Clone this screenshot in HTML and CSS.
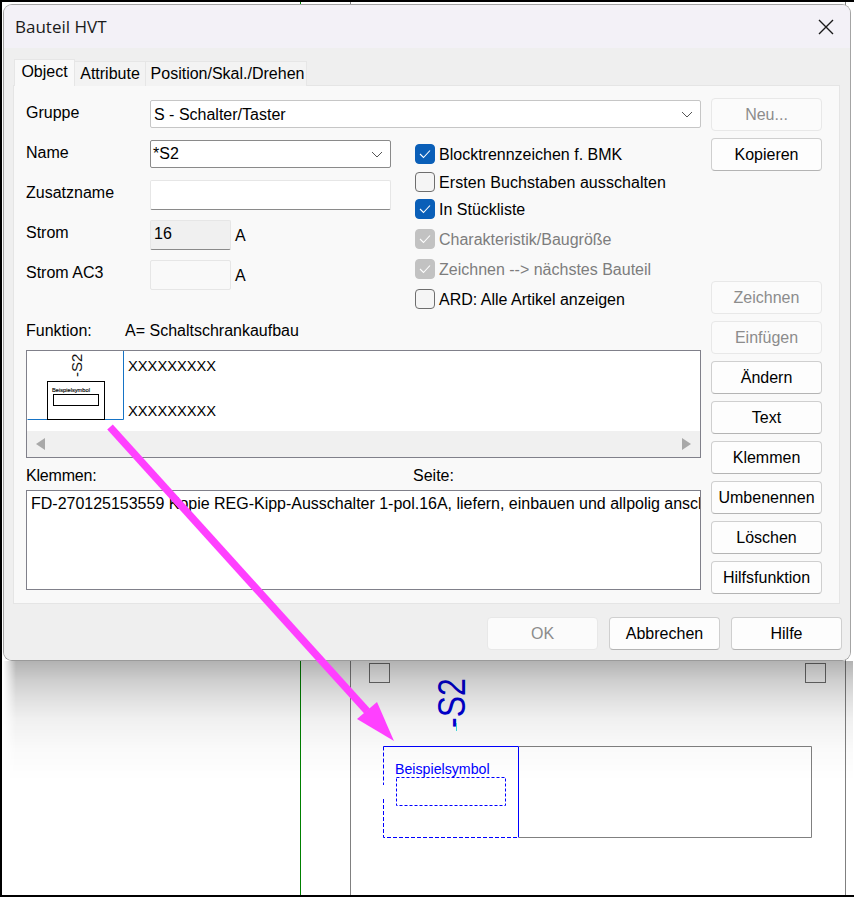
FILE: index.html
```html
<!DOCTYPE html>
<html lang="de">
<head>
<meta charset="utf-8">
<title>Bauteil HVT</title>
<link rel="stylesheet" href="styles.css">
</head>
<body>
<div class="desk">
  <svg class="canvas" width="854" height="897" viewBox="0 0 854 897">
    <line x1="300.5" y1="0" x2="300.5" y2="897" stroke="#008000"/>
    <line x1="350.5" y1="0" x2="350.5" y2="897" stroke="#808080"/>
    <line x1="845.5" y1="0" x2="845.5" y2="897" stroke="#808080"/>
    <rect x="369.5" y="663.5" width="20" height="19" fill="none" stroke="#707070"/>
    <rect x="805.5" y="663.5" width="20" height="19" fill="none" stroke="#707070"/>
    <path d="M519 746.5H811.5V837.5H519" fill="none" stroke="#808080"/>
    <path d="M383.5 746.5H518.5V837.5" fill="none" stroke="#0000ff"/>
    <path d="M383.5 746.5V785M383.5 799V837.5H518" fill="none" stroke="#0000ff" stroke-dasharray="4 2"/>
    <rect x="396.5" y="777.5" width="109" height="28" fill="none" stroke="#0000ff" stroke-dasharray="3 2"/>
    <text class="cad-label" x="395" y="774">Beispielsymbol</text>
    <text class="cad-tag" transform="translate(465 728) rotate(-90) scale(1 1.2)">-S2</text>
    <line x1="456.5" y1="723" x2="456.5" y2="731" stroke="#40e0e0"/>
  </svg>

  <section class="dialog">
    <header class="titlebar">
      <span class="title">Bauteil HVT</span>
      <svg class="close" width="16" height="16" viewBox="0 0 16 16"><path d="M1 1L15 15M15 1L1 15" stroke="#1a1a1a" stroke-width="1.4" fill="none"/></svg>
    </header>
    <div class="dialog-body">
      <nav class="tabs">
        <span class="tab tab-active">Object</span>
        <span class="tab tab-attr">Attribute</span>
        <span class="tab tab-pos">Position/Skal./Drehen</span>
      </nav>
      <div class="panel">
        <div class="main">
          <div class="combo combo-wide"><span>S - Schalter/Taster</span>
            <svg class="chev" width="12" height="7" viewBox="0 0 12 7"><path d="M1 1L6 6L11 1" fill="none" stroke="#555" stroke-width="1"/></svg>
          </div>
          <div class="label-gruppe">Gruppe</div>
          <div class="form">
            <div class="fields">
              <div class="field field-name"><label>Name</label>
                <div class="combo combo-name"><span>*S2</span>
                  <svg class="chev" width="12" height="7" viewBox="0 0 12 7"><path d="M1 1L6 6L11 1" fill="none" stroke="#555" stroke-width="1"/></svg>
                </div>
              </div>
              <div class="field"><label>Zusatzname</label><div class="input input-full"></div></div>
              <div class="field"><label>Strom</label><div class="input input-ro">16</div><span class="unit">A</span></div>
              <div class="field"><label>Strom AC3</label><div class="input input-off"></div><span class="unit">A</span></div>
            </div>
            <div class="checks">
              <div class="check"><span class="box box-on"><svg width="12" height="10" viewBox="0 0 12 10"><path d="M1 5L4.500 8.500L11 1.500" fill="none" stroke="#fff" stroke-width="1.100"/></svg></span>Blocktrennzeichen f. BMK</div>
              <div class="check check-long"><span class="box"></span>Ersten Buchstaben ausschalten</div>
              <div class="check check-tight"><span class="box box-on"><svg width="12" height="10" viewBox="0 0 12 10"><path d="M1 5L4.500 8.500L11 1.500" fill="none" stroke="#fff" stroke-width="1.100"/></svg></span>In Stückliste</div>
              <div class="check check-wide check-off"><span class="box box-dim"><svg width="12" height="10" viewBox="0 0 12 10"><path d="M1 5L4.500 8.500L11 1.500" fill="none" stroke="#fff" stroke-width="1.100"/></svg></span>Charakteristik/Baugröße</div>
              <div class="check check-wide check-off"><span class="box box-dim"><svg width="12" height="10" viewBox="0 0 12 10"><path d="M1 5L4.500 8.500L11 1.500" fill="none" stroke="#fff" stroke-width="1.100"/></svg></span>Zeichnen --&gt; nächstes Bauteil</div>
              <div class="check check-wide"><span class="box"></span>ARD: Alle Artikel anzeigen</div>
            </div>
          </div>
          <div class="func-line"><span class="func-label">Funktion:</span><span>A= Schaltschrankaufbau</span></div>
          <div class="listbox">
            <div class="list-row">
              <svg class="thumb" width="97" height="69" viewBox="0 0 97 69">
                <path d="M0.500 68.500H96.500V0" fill="none" stroke="#1673c5"/>
                <rect x="20.500" y="30.500" width="57" height="38" fill="#fff" stroke="#000" stroke-width="1"/>
                <rect x="26.500" y="43.500" width="45" height="11" fill="none" stroke="#000" stroke-width="1"/>
                <text class="thumb-label" x="25" y="41">Beispielsymbol</text>
                <text class="thumb-tag" transform="translate(54.500 26) rotate(-90)">-S2</text>
              </svg>
              <div class="list-text"><span>XXXXXXXXX</span><span>XXXXXXXXX</span></div>
            </div>
            <div class="hscroll">
              <svg width="10" height="12" viewBox="0 0 10 12"><path d="M9 0V12L0 6Z" fill="#a8a8a8"/></svg>
              <svg width="10" height="12" viewBox="0 0 10 12"><path d="M1 0V12L10 6Z" fill="#a8a8a8"/></svg>
            </div>
          </div>
          <div class="labels-line"><span class="label-klemmen">Klemmen:</span><span>Seite:</span></div>
          <div class="memo"><span class="memo-line">FD-270125153559 Kopie REG-Kipp-Ausschalter 1-pol.16A, liefern, einbauen und allpolig anschl</span></div>
        </div>
        <div class="side">
          <button class="btn btn-off">Neu...</button>
          <button class="btn">Kopieren</button>
          <div class="side-gap"></div>
          <button class="btn btn-off">Zeichnen</button>
          <button class="btn btn-off">Einfügen</button>
          <button class="btn">Ändern</button>
          <button class="btn">Text</button>
          <button class="btn">Klemmen</button>
          <button class="btn">Umbenennen</button>
          <button class="btn">Löschen</button>
          <button class="btn">Hilfsfunktion</button>
        </div>
      </div>
      <footer class="footer">
        <button class="btn btn-off">OK</button>
        <button class="btn">Abbrechen</button>
        <button class="btn">Hilfe</button>
      </footer>
    </div>
  </section>

  <svg class="arrow" width="854" height="897" viewBox="0 0 854 897">
    <line x1="110" y1="427" x2="367" y2="711" stroke="#ff40ff" stroke-width="7.500"/>
    <path d="M394 741L377 702L357 719Z" fill="#ff40ff"/>
  </svg>
</div>
</body>
</html>
```

FILE: styles.css
```css
* { box-sizing: border-box; }
html, body { margin: 0; padding: 0; }
body { background: #fff; font-family: "Liberation Sans", Arial, sans-serif; font-size: 16px; color: #000; }
.desk { position: relative; width: 854px; height: 897px; overflow: hidden; background: #fff; }
.desk::after { content: ""; position: absolute; inset: 0; border: solid #000; border-width: 2px 0 2px 2px; pointer-events: none; }
.canvas { position: absolute; left: 0; top: 0; }
.arrow { position: absolute; left: 0; top: 0; z-index: 3; }
.cad-label { font: 14.200px "Liberation Sans", sans-serif; fill: #0000ff; }
.cad-tag { font: 32px "Liberation Sans", sans-serif; fill: #0000d8; }

.dialog { position: absolute; left: 3px; top: 4px; width: 848px; height: 657px; display: flex; flex-direction: column; border: 1px solid #a4a4a4; border-bottom-color: #9a9a9a; border-radius: 9px; background: #efefef; }
.dialog::after { content: ""; position: absolute; left: -1px; right: -3px; top: 100%; margin-top: 1px; height: 130px; background: linear-gradient(180deg, rgba(0,0,0,.3) 0, rgba(0,0,0,.2) 18px, rgba(0,0,0,.12) 38px, rgba(0,0,0,.06) 58px, rgba(0,0,0,.02) 88px, rgba(0,0,0,0) 120px); -webkit-mask-image: linear-gradient(90deg, transparent 0, #000 13px); mask-image: linear-gradient(90deg, transparent 0, #000 13px); pointer-events: none; }
.titlebar { height: 43px; flex: none; display: flex; align-items: center; justify-content: space-between; padding: 0 16px 0 11px; background: #f3f1f7; border-radius: 8px 8px 0 0; }
.title { font: 17px "Open Sans", sans-serif; color: #1a1a1a; margin-top: -1px; }
.dialog-body { flex: 1; display: flex; flex-direction: column; padding: 0 10px 0 9px; border-radius: 0 0 8px 8px; background: #efefef; }
.tabs { display: flex; align-items: flex-end; height: 38px; margin-bottom: -1px; position: relative; z-index: 1; }
.tab { height: 25px; line-height: 24px; border: 1px solid #e6e6e6; border-bottom: none; border-left: none; background: #f3f3f3; text-align: center; }
.tab-active { width: 61px; height: 27px; margin-left: 1px; border-left: 1px solid #e6e6e6; background: #f9f9f9; }
.tab-attr { width: 71px; }
.tab-pos { width: 161px; padding-left: 3px; }
.panel { height: 519px; flex: none; display: flex; gap: 10px; padding: 12px 17px 0 12px; background: #f9f9f9; border: 1px solid #e5e5e5; }
.main { width: 675px; flex: none; padding-top: 2px; position: relative; }
.combo { height: 28px; display: flex; align-items: center; justify-content: space-between; background: #fff; border: 1px solid #c6c6c6; border-radius: 2px; }
.combo-wide { margin-left: 124px; padding: 1px 7px 0 3px; }
.combo-name { width: 241px; padding: 0 7px 0 2px; border-color: #8a8a8a; }
.label-gruppe { position: absolute; left: 0; top: 6px; }
.form { display: flex; margin-top: 12px; height: 170px; }
.fields { width: 365px; flex: none; display: flex; flex-direction: column; gap: 10px; }
.field { display: flex; align-items: center; height: 30px; }
.field-name { height: 28px; margin-bottom: 2px; }
.field label { width: 124px; flex: none; margin-top: -5px; }
.field-name label { margin-top: -3px; }
.input { height: 30px; background: #fff; border: 1px solid #e6e6e6; border-radius: 2px; }
.input-full { width: 241px; border-bottom-color: #8a8a8a; }
.input-ro { width: 81px; padding: 3px 0 0 3px; line-height: 20px; background: #f0f0f0; border-bottom-color: #8a8a8a; }
.input-off { width: 81px; background: #f9f9f9; }
.unit { margin: 1px 0 0 4px; }
.checks { margin: 4px 0 0 24px; display: flex; flex-direction: column; }
.check { display: flex; align-items: center; gap: 4px; height: 20px; padding-top: 2px; margin-top: 8px; }
.check:first-child { margin-top: 0; }
.check-long { letter-spacing: .07px; }
.check-tight { margin-top: 7px; }
.check-wide { margin-top: 10px; }
.check-off { color: #7d7d7d; }
.box { width: 20px; height: 20px; margin-top: -2px; flex: none; display: flex; align-items: center; justify-content: center; border: 1px solid #6e6e6e; border-radius: 4px; background: #f5f5f5; }
.box-on { background: #0a5fb8; border-color: #0a5fb8; }
.box-dim { background: #c2c2c2; border-color: #c2c2c2; }
.func-line { display: flex; margin-top: 10px; padding-top: 1px; height: 20px; line-height: 20px; }
.func-label { width: 99px; flex: none; }
.listbox { height: 108px; margin-top: 10px; background: #fff; border: 1px solid #80808a; display: flex; flex-direction: column; }
.list-row { height: 80px; flex: none; display: flex; }
.thumb { flex: none; }
.thumb-label { font: 5.700px "Liberation Sans", sans-serif; fill: #000; stroke: #000; stroke-width: .15px; }
.thumb-tag { font: 15px "Liberation Sans", sans-serif; fill: #111; }
.list-text { height: 69px; padding: 6px 0 0 4px; display: flex; flex-direction: column; justify-content: space-between; font-size: 14.700px; line-height: 18px; }
.hscroll { height: 26px; flex: none; display: flex; align-items: center; justify-content: space-between; padding: 0 9px; background: #f0f0f0; }
.labels-line { display: flex; margin-top: 7px; padding-top: 1px; height: 20px; line-height: 20px; }
.label-klemmen { width: 387px; flex: none; letter-spacing: -.2px; }
.memo { height: 100px; margin-top: 5px; padding: 4px 0 0 4px; background: #fff; border: 1px solid #80808a; overflow: hidden; white-space: nowrap; line-height: 18px; }
.memo-line { letter-spacing: -.01px; }
.side { width: 111px; flex: none; display: flex; flex-direction: column; gap: 7px; }
.side-gap { height: 96px; }
.btn { width: 111px; height: 33px; flex: none; padding: 0; font: 16px "Liberation Sans", sans-serif; color: #000; background: #fdfdfd; border: 1px solid #cfcfcf; border-bottom-color: #b4b4b4; border-radius: 4px; }
.btn-off { color: #8c8c8c; background: #fbfbfb; border-color: #e8e8e8; }
.footer { display: flex; justify-content: flex-end; gap: 11px; margin-right: -2px; padding-top: 13px; }
```
